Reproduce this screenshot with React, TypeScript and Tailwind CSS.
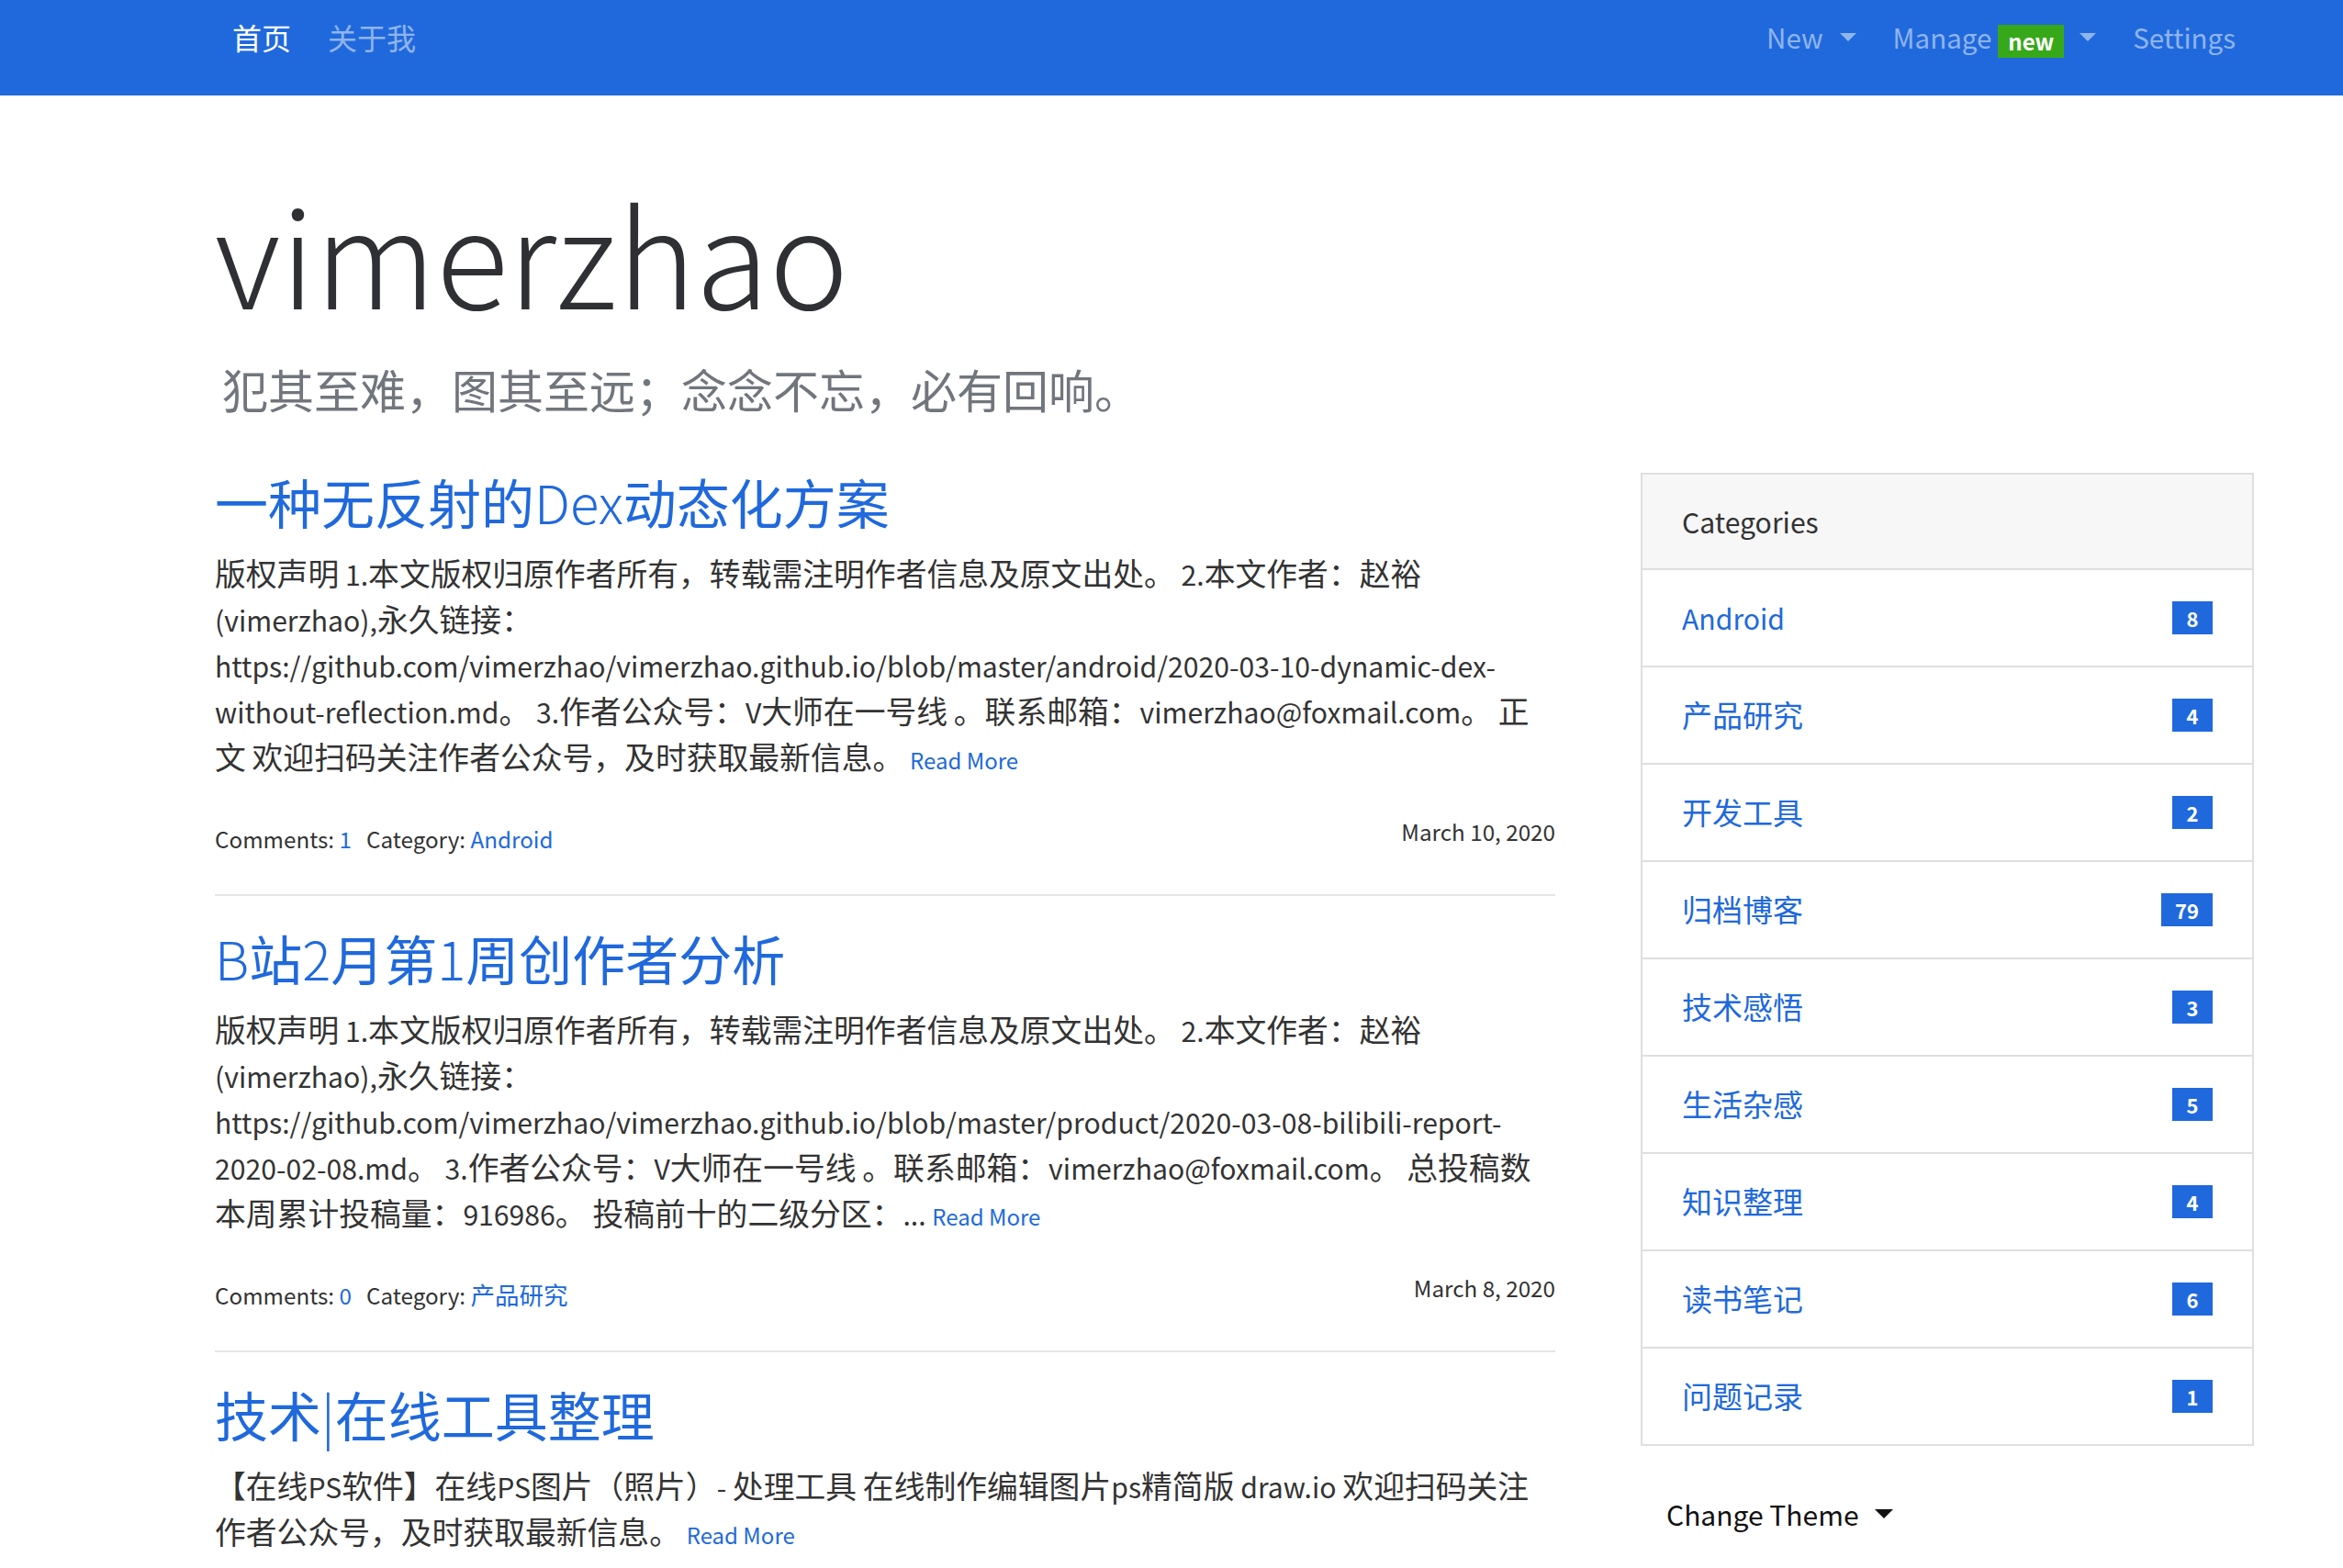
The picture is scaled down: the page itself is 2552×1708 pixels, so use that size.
import React from "react";

const LATIN = /^[\u0000-\u007F]+$/;

type Mode = "default" | "body" | "title";

function T({ s, mode = "default" }: { s: string; mode?: Mode }) {
  const parts = s.split(/([\u0000-\u007F]+)/).filter((p) => p.length > 0);
  const cls =
    mode === "title"
      ? "leading-none font-light"
      : mode === "body"
      ? "text-[0.893em] leading-none"
      : "text-[0.914em] leading-none";
  return (
    <>
      {parts.map((p, i) =>
        LATIN.test(p) ? (
          <span key={i} className={cls}>
            {p}
          </span>
        ) : (
          <React.Fragment key={i}>{p}</React.Fragment>
        )
      )}
    </>
  );
}

function Caret({ light = true }: { light?: boolean }) {
  return (
    <span
      className={
        light
          ? "inline-block w-0 h-0 border-x-[9px] border-x-transparent border-t-[9px] border-t-[#8fb5ee]"
          : "inline-block w-0 h-0 border-x-[10px] border-x-transparent border-t-[10px] border-t-[#111111]"
      }
    />
  );
}

const categories: [string, string][] = [
  ["Android", "8"],
  ["产品研究", "4"],
  ["开发工具", "2"],
  ["归档博客", "79"],
  ["技术感悟", "3"],
  ["生活杂感", "5"],
  ["知识整理", "4"],
  ["读书笔记", "6"],
  ["问题记录", "1"],
];

function Meta({ comments, category, date }: { comments: string; category: string; date: string }) {
  return (
    <div className="mt-[32px] flex justify-between items-start text-[26.5px] leading-[39px] text-[#333333]">
      <div className="pt-[8px]">
        <T s="Comments: " />
        <a className="text-[#2069dc]">
          <T s={comments} />
        </a>
        <span className="ml-[16px]">
          <T s="Category: " />
        </span>
        <a className="text-[#2069dc]">
          <T s={category} />
        </a>
      </div>
      <div>
        <T s={date} />
      </div>
    </div>
  );
}

function ReadMore() {
  return <a className="text-[24px] text-[#2069dc]">Read More</a>;
}

function Body({ lines, tail }: { lines: string[]; tail: string }) {
  return (
    <div className="mt-[18px] text-[33.8px] leading-[50px] whitespace-nowrap">
      {lines.map((l, i) => (
        <React.Fragment key={i}>
          <T s={l} mode="body" />
          <br />
        </React.Fragment>
      ))}
      <T s={tail} mode="body" />
      <ReadMore />
    </div>
  );
}

export default function App() {
  return (
    <div className="min-h-[1708px] bg-white font-['Noto_Sans_CJK_SC','Noto_Sans',sans-serif] text-[#333333]">
      <nav className="h-[104px] bg-[#2069dc] flex items-start pt-[16px] pl-[233px] pr-[97px] text-[32px] leading-[48px]">
        <div className="flex">
          <a className="px-[20px] text-white">首页</a>
          <a className="px-[20px] text-white/50">关于我</a>
        </div>
        <div className="ml-auto flex text-white/50 text-[29.5px]">
          <a className="px-[20px] flex items-center">
            New
            <span className="ml-[18px] flex">
              <Caret />
            </span>
          </a>
          <a className="px-[20px] flex items-center">
            Manage
            <span className="ml-[7px] translate-y-[5px] h-[36px] px-[11px] bg-[#38a81b] text-white text-[24px] leading-[36px] font-bold">
              new
            </span>
            <span className="ml-[17px] flex">
              <Caret />
            </span>
          </a>
          <a className="px-[20px]">Settings</a>
        </div>
      </nav>

      <div className="ml-[234px] w-[2221px]">
        <h1 className="mt-[90px] text-[146px] leading-[160px] font-light text-[#2f3033]">vimerzhao</h1>
        <p className="mt-[39px] pl-[8px] text-[50px] leading-[60px] text-[#71767d]">
          犯其至难，图其至远；念念不忘，必有回响。
        </p>

        <div className="mt-[58px] flex items-start">
          <main className="w-[1460px]">
            <article>
              <h2 className="text-[58px] leading-[70px] font-normal text-[#2069dc]">
                <T s="一种无反射的Dex动态化方案" mode="title" />
              </h2>
              <Body
                lines={[
                  "版权声明 1.本文版权归原作者所有，转载需注明作者信息及原文出处。 2.本文作者：赵裕",
                  "(vimerzhao),永久链接：",
                  "https://github.com/vimerzhao/vimerzhao.github.io/blob/master/android/2020-03-10-dynamic-dex-",
                  "without-reflection.md。 3.作者公众号：V大师在一号线 。联系邮箱：vimerzhao@foxmail.com。 正",
                ]}
                tail="文 欢迎扫码关注作者公众号，及时获取最新信息。 "
              />
              <Meta comments="1" category="Android" date="March 10, 2020" />
              <hr className="mt-[42px] border-0 border-t-2 border-t-[#e6e6e6]" />
            </article>

            <article className="mt-[32px]">
              <h2 className="text-[58px] leading-[70px] font-normal text-[#2069dc]">
                <T s="B站2月第1周创作者分析" mode="title" />
              </h2>
              <Body
                lines={[
                  "版权声明 1.本文版权归原作者所有，转载需注明作者信息及原文出处。 2.本文作者：赵裕",
                  "(vimerzhao),永久链接：",
                  "https://github.com/vimerzhao/vimerzhao.github.io/blob/master/product/2020-03-08-bilibili-report-",
                  "2020-02-08.md。 3.作者公众号：V大师在一号线 。联系邮箱：vimerzhao@foxmail.com。 总投稿数",
                ]}
                tail="本周累计投稿量：916986。 投稿前十的二级分区：... "
              />
              <Meta comments="0" category="产品研究" date="March 8, 2020" />
              <hr className="mt-[42px] border-0 border-t-2 border-t-[#e6e6e6]" />
            </article>

            <article className="mt-[32px]">
              <h2 className="text-[58px] leading-[70px] font-normal text-[#2069dc]">
                <T s="技术|在线工具整理" mode="title" />
              </h2>
              <Body
                lines={["【在线PS软件】在线PS图片（照片）- 处理工具 在线制作编辑图片ps精简版 draw.io 欢迎扫码关注"]}
                tail="作者公众号，及时获取最新信息。 "
              />
            </article>
          </main>

          <aside className="ml-auto w-[668px] mt-[4px]">
            <div className="border-2 border-[#dfdfdf]">
              <div className="h-[104px] bg-[#f7f7f7] border-b-2 border-b-[#dfdfdf] flex items-center pl-[43px] text-[33px] text-[#333333]">
                <T s="Categories" />
              </div>
              {categories.map(([name, count], i) => (
                <div
                  key={name}
                  className={
                    i < categories.length - 1
                      ? "h-[106px] border-b-2 border-b-[#dfdfdf] flex items-center justify-between pl-[43px] pr-[43px]"
                      : "h-[104px] flex items-center justify-between pl-[43px] pr-[43px]"
                  }
                >
                  <a className="text-[33px] text-[#2069dc]">
                    <T s={name} />
                  </a>
                  <span className="h-[36px] min-w-[44px] px-[15px] bg-[#2069dc] text-white text-[22px] leading-[36px] font-bold text-center">
                    {count}
                  </span>
                </div>
              ))}
            </div>
            <div className="mt-[50px] pl-[28px] flex items-center text-[30px] leading-[48px] text-[#111111]">
              Change Theme
              <span className="ml-[17px] flex">
                <Caret light={false} />
              </span>
            </div>
          </aside>
        </div>
      </div>
    </div>
  );
}
